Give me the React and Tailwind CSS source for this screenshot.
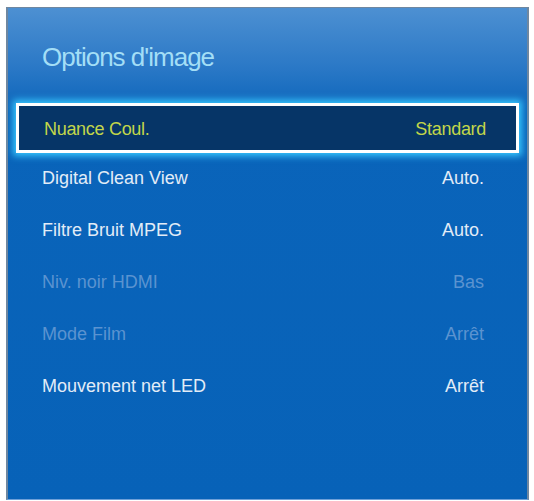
const ROWS = [
  { label: 'Digital Clean View', value: 'Auto.', disabled: false },
  { label: 'Filtre Bruit MPEG', value: 'Auto.', disabled: false },
  { label: 'Niv. noir HDMI', value: 'Bas', disabled: true },
  { label: 'Mode Film', value: 'Arrêt', disabled: true },
  { label: 'Mouvement net LED', value: 'Arrêt', disabled: false },
];

export default function App() {
  return (
    <div className="w-[534px] h-[501px] bg-white pt-[7px] pl-[6px] font-['Liberation_Sans',Arial,sans-serif]">
      <div className="w-[523px] h-[493px] flex flex-col border-x-2 border-t border-[#6f87a0] border-b border-b-[#6fa0d8] bg-[linear-gradient(to_bottom,#4d90d2_0px,#2a78c6_60px,#0a64ba_105px,#0762b8_100%)]">
        {/* Header */}
        <div className="h-[92px] pl-[34px] pt-[34px]">
          <h1 className="text-[26px] leading-[30px] font-normal text-[#a3def6] tracking-[-1px]">Options d'image</h1>
        </div>

        {/* Selected row */}
        <div className="px-[8px] pt-[3px]">
          <div className="h-[50px] border-[3px] border-white bg-[#063567] shadow-[0_0_7px_3px_#38c8ff] flex items-center justify-between pl-[25px] pr-[30px] pt-[3px]">
            <span className="text-[18px] text-[#c2d64a] tracking-[-0.3px]">Nuance Coul.</span>
            <span className="text-[18px] text-[#c2d64a] tracking-[-0.3px]">Standard</span>
          </div>
        </div>

        {/* Rows */}
        <div className="flex flex-col -mt-[1px]">
          {ROWS.map((row) => (
            <div key={row.label} className="h-[52px] flex items-center justify-between pl-[34px] pr-[43px]">
              <span className={`text-[18px] tracking-[0px] ${row.disabled ? 'text-[#5b93d0]' : 'text-[#e2ecf7]'}`}>{row.label}</span>
              <span className={`text-[18px] tracking-[0px] ${row.disabled ? 'text-[#5b93d0]' : 'text-[#e2ecf7]'}`}>{row.value}</span>
            </div>
          ))}
        </div>
      </div>
    </div>
  );
}
